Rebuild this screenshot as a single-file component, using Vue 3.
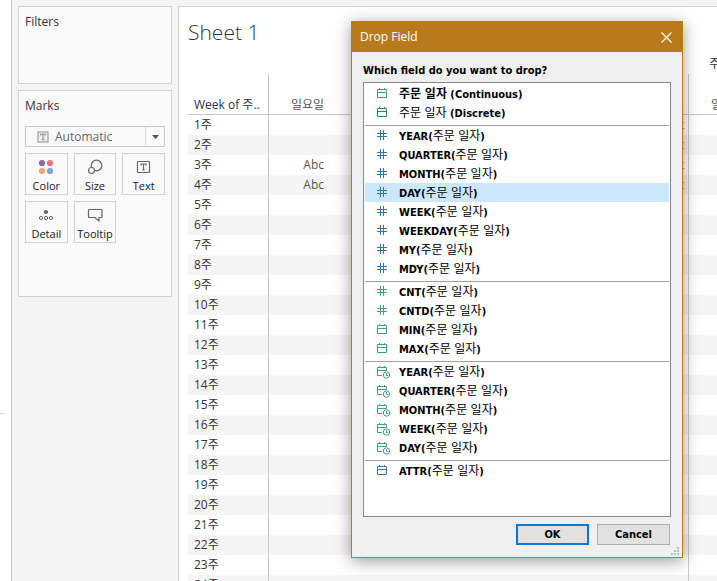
<script setup>
import { ref } from 'vue'

const markType = ref('Automatic')
const marks = ['Color', 'Size', 'Text', 'Detail', 'Tooltip']
const weekdays = ['일요일', '월요일', '화요일', '수요일', '목요일', '금요일', '토요일']
const columns = [...weekdays, ...weekdays]

// Column indexes that hold a mark, by week number
const filled = { 1: [6], 2: [6], 3: [0, 6], 4: [0, 6] }
const weeks = Array.from({ length: 30 }, (_, i) => i + 1)

const field = '주문 일자'
const item = (id, pre, post, icon, tone) => ({ id, pre, post, icon, tone })
const fn = (name, icon, tone) => item(`${name}-${icon}`, `${name}(`, ')', icon, tone)

const groups = [
  [
    { ...item('continuous', '', ' (Continuous)', 'date', 'green'), strong: true },
    item('discrete', '', ' (Discrete)', 'date', 'blue'),
  ],
  ['YEAR', 'QUARTER', 'MONTH', 'DAY', 'WEEK', 'WEEKDAY', 'MY', 'MDY'].map((n) => fn(n, 'number', 'blue')),
  [
    fn('CNT', 'number', 'green'),
    fn('CNTD', 'number', 'green'),
    fn('MIN', 'date', 'green'),
    fn('MAX', 'date', 'green'),
  ],
  ['YEAR', 'QUARTER', 'MONTH', 'WEEK', 'DAY'].map((n) => fn(n, 'datetime', 'green')),
  [fn('ATTR', 'date', 'blue')],
]
const selected = ref('DAY-number')
const open = ref(true)
</script>

<template>
  <div class="app">
    <div class="data-pane"><hr class="pane-rule" /></div>

    <aside class="shelves">
      <section class="card filters">
        <h2>Filters</h2>
      </section>
      <section class="card marks">
        <h2>Marks</h2>
        <div class="mark-type">
          <select v-model="markType" aria-label="Mark type">
            <option>Automatic</option>
            <option>Bar</option>
            <option>Line</option>
          </select>
          <svg class="type-icon" width="12" height="12" viewBox="0 0 12 12" aria-hidden="true">
            <rect x="1" y="1" width="10" height="10" fill="#f0f0f0" stroke="#aaa" stroke-width="1.4" />
            <path d="M3.5 4.5v-1.2h5v1.2M6 3.3v5.4M4.6 8.7h2.8" fill="none" stroke="#999" stroke-width="1.2" />
          </svg>
          <span class="arrow" aria-hidden="true"><svg width="7" height="4" viewBox="0 0 7 4"><path d="M0 0h7L3.5 4z" fill="#555" /></svg></span>
        </div>
        <div class="mark-grid">
          <button v-for="m in marks" :key="m" type="button" class="mark">
            <svg width="16" height="16" viewBox="0 0 16 16" fill="none" stroke="#666" stroke-width="1.2" aria-hidden="true">
              <g v-if="m === 'Color'" stroke="none">
                <circle cx="4" cy="4" r="3.1" fill="#84709b" />
                <circle cx="12" cy="4" r="3.1" fill="#fc7183" />
                <circle cx="4" cy="12" r="3.1" fill="#f3a67c" />
                <circle cx="12" cy="12" r="3.1" fill="#82a6cd" />
              </g>
              <g v-else-if="m === 'Size'">
                <circle cx="9.5" cy="6.5" r="5.3" />
                <circle cx="4.5" cy="11.5" r="3" fill="#fafafa" />
              </g>
              <g v-else-if="m === 'Text'">
                <rect x="1.5" y="2.5" width="12" height="11" rx="0.5" />
                <path d="M5 6.5V5h5v1.5M7.5 5v6M6.2 11h2.6" />
              </g>
              <g v-else-if="m === 'Detail'">
                <circle cx="8" cy="5" r="2.1" fill="#666" stroke="none" />
                <circle cx="3" cy="11" r="1.6" stroke-width="1" />
                <circle cx="8" cy="11" r="1.6" stroke-width="1" />
                <circle cx="13" cy="11" r="1.6" stroke-width="1" />
              </g>
              <path v-else d="M2.1 2.5h12.3q.6 0 .6.6v6.8q0 .6-.6.6h-2.4V14l-4-3.5H2.1q-.6 0-.6-.6V3.1q0-.6.6-.6z" />
            </svg>
            <span>{{ m }}</span>
          </button>
        </div>
      </section>
    </aside>

    <main class="sheet">
      <h1>Sheet 1</h1>
      <table>
        <colgroup>
          <col class="stub-col" />
          <col v-for="(c, i) in columns" :key="i" class="day-col" />
        </colgroup>
        <thead>
          <tr class="group-head">
            <th colspan="8"></th>
            <th colspan="7" class="group">{{ field }}</th>
          </tr>
          <tr class="day-head">
            <th class="stub">Week of 주..</th>
            <th v-for="(c, i) in columns" :key="i" :class="{ edge: i % 7 === 6 }">{{ c }}</th>
          </tr>
        </thead>
        <tbody>
          <tr v-for="w in weeks" :key="w">
            <th class="stub">{{ w }}주</th>
            <td v-for="(c, i) in columns" :key="i" :class="{ edge: i % 7 === 6 }">{{ filled[w]?.includes(i) ? 'Abc' : '' }}</td>
          </tr>
        </tbody>
      </table>
    </main>

    <div v-if="open" class="dialog" role="dialog" aria-labelledby="dlg-title">
      <header class="titlebar">
        <span id="dlg-title">Drop Field</span>
        <button type="button" class="close" aria-label="Close" @click="open = false">
          <svg width="11" height="11" viewBox="0 0 11 11"><path d="M.5.5l10 10M10.5.5l-10 10" stroke="#fff" stroke-width="1.2" /></svg>
        </button>
      </header>
      <div class="dialog-body">
        <p id="dlg-prompt">Which field do you want to drop?</p>
        <div class="field-list" role="listbox" aria-labelledby="dlg-prompt">
          <div v-for="(g, gi) in groups" :key="gi" class="field-group" role="group">
            <button
              v-for="f in g"
              :key="f.id"
              type="button"
              role="option"
              class="field"
              :class="[f.tone, { selected: selected === f.id }]"
              :aria-selected="selected === f.id"
              @click="selected = f.id"
            >
              <svg class="field-icon" width="14" height="15" viewBox="0 0 14 15" fill="none" stroke="currentColor" aria-hidden="true">
                <path v-if="f.icon === 'number'" d="M3.5 2v10M6.5 2v10M0 5.5h10M0 8.5h10" />
                <path v-else-if="f.icon === 'date'" d="M.5 3.5h9v8h-9zM.5 6.5h9M2.5 2v2M7.5 2v2" />
                <g v-else>
                  <path d="M5 11.5H.5v-8h9v3H.5M2.5 2v2M7.5 2v2" />
                  <circle cx="9.5" cy="11" r="3.2" />
                  <path d="M9.5 9v2.5h1.7" />
                </g>
              </svg>
              <span class="label">{{ f.pre }}<span class="ko" :class="{ strong: f.strong }">{{ field }}</span>{{ f.post }}</span>
            </button>
          </div>
        </div>
        <footer>
          <button type="button" class="push primary">OK</button>
          <button type="button" class="push" @click="open = false">Cancel</button>
        </footer>
      </div>
      <svg class="grip" width="8" height="8" viewBox="0 0 8 8" fill="#bfbfbf" aria-hidden="true">
        <path d="M6 0h2v2H6zM3 3h2v2H3zM6 3h2v2H6zM0 6h2v2H0zM3 6h2v2H3zM6 6h2v2H6z" />
      </svg>
    </div>
  </div>
</template>

<style>
body {
  margin: 0;
  background: #f4f4f4;
}
</style>

<style scoped>
.app {
  position: relative;
  display: flex;
  height: 100vh;
  overflow: hidden;
  box-sizing: border-box;
  background: #f4f4f4;
  color: #333;
  font-family: "Open Sans", "Noto Sans CJK KR", sans-serif;
  font-size: 12px;
  line-height: 16px;
}
.app * {
  box-sizing: border-box;
}
button,
select {
  font: inherit;
  color: inherit;
}
h1,
h2,
p {
  margin: 0;
}
.data-pane {
  flex: 0 0 12px;
  display: flex;
  align-items: flex-start;
  background: #fff;
  border-right: 1px solid #cdcdcd;
}
.pane-rule {
  width: 5px;
  margin: 413px 0 0;
  border: 0;
  border-top: 1px solid #ddd;
}
.shelves {
  flex: 0 0 166px;
  display: flex;
  flex-direction: column;
  gap: 6px;
  padding: 6px;
}
.card {
  padding: 6px;
  background: #fafafa;
  border: 1px solid #d0d0d0;
}
.card h2 {
  font-size: 12px;
  font-weight: 400;
  line-height: 18px;
}
.filters {
  height: 78px;
}
.marks {
  height: 207px;
}
.mark-type {
  display: grid;
  align-items: center;
  margin-top: 11px;
}
.mark-type > * {
  grid-area: 1 / 1;
}
.mark-type select {
  width: 100%;
  height: 21px;
  padding: 0 0 0 29px;
  appearance: none;
  background: #fafafa;
  border: 1px solid #c8c8c8;
  border-radius: 1px;
  color: #666;
}
.type-icon {
  margin-left: 12px;
  pointer-events: none;
}
.arrow {
  display: flex;
  align-items: center;
  justify-content: center;
  justify-self: end;
  width: 20px;
  height: 19px;
  border-left: 1px solid #ddd;
  pointer-events: none;
}
.mark-grid {
  display: grid;
  grid-template-columns: repeat(3, 1fr);
  gap: 6px;
  margin-top: 6px;
}
.mark {
  display: flex;
  flex-direction: column;
  align-items: center;
  gap: 3px;
  height: 42px;
  padding: 5px 0 0;
  background: #fafafa;
  border: 1px solid #d0d0d0;
  font-size: 11px;
  color: #222;
}
.sheet {
  flex: 1;
  min-width: 0;
  margin-top: 6px;
  padding: 12px 0 0 9px;
  overflow: hidden;
  background: #fff;
  border: solid #d0d0d0;
  border-width: 1px 0 0 1px;
}
.sheet h1 {
  font-size: 21px;
  font-weight: 300;
  line-height: 26px;
}
table {
  width: 921px;
  margin-top: 9px;
  table-layout: fixed;
  border-collapse: separate;
  border-spacing: 0;
}
.stub-col {
  width: 81px;
}
.day-col {
  width: 60px;
}
th,
td {
  height: 20px;
  padding: 0 5px 0 0;
  font-weight: 400;
  line-height: 18px;
  text-align: right;
  white-space: nowrap;
  color: #555;
}
.stub {
  padding: 0 0 0 6px;
  line-height: 20px;
  text-align: left;
  color: #333;
  border-right: 1px solid #c8c8c8;
}
.edge {
  padding-right: 4px;
  border-right: 1px solid #c8c8c8;
}
.group-head .group {
  padding: 0 0 0 20px;
  text-align: left;
  color: #333;
}
.day-head th {
  height: 41px;
  line-height: 18px;
  vertical-align: bottom;
  border-bottom: 1px solid #c8c8c8;
}
tbody tr:nth-child(even) {
  background: #f5f5f5;
}
.dialog {
  position: absolute;
  top: 21px;
  left: 351px;
  width: 332px;
  background: #f0f0f0;
  border: 1px solid #b97a1b;
  box-shadow: 0 3px 15px rgba(0, 0, 0, 0.4);
  color: #000;
}
.titlebar {
  display: flex;
  align-items: center;
  justify-content: space-between;
  height: 30px;
  padding: 0 10px 0 8px;
  background: #b97a1b;
  color: #fff;
}
.close {
  display: flex;
  padding: 0;
  background: none;
  border: 0;
}
.dialog-body {
  padding: 10px 11px 12px;
  font-family: "DejaVu Sans Condensed", "Noto Sans CJK KR", sans-serif;
  font-size: 11px;
  font-weight: 700;
}
.dialog-body p {
  line-height: 18px;
}
.field-list {
  height: 435px;
  margin-top: 2px;
  padding: 1px;
  background: #fff;
  border: 1px solid #828790;
}
.field-group + .field-group {
  margin-top: 3px;
  border-top: 1px solid #a0a0a0;
}
.field {
  display: flex;
  align-items: center;
  gap: 8px;
  width: 100%;
  height: 19px;
  padding: 0 0 0 12px;
  background: none;
  border: 0;
  text-align: left;
}
.field-icon {
  overflow: visible;
}
.field.selected {
  background: #cce8ff;
}
.green {
  color: #449e7a;
}
.blue {
  color: #35779a;
}
.label {
  padding-top: 2px;
  color: #000;
  line-height: 17px;
  white-space: pre;
}
.ko {
  font-size: 12px;
  font-weight: 400;
  line-height: 12px;
}
.ko.strong {
  font-weight: 700;
}
footer {
  display: flex;
  justify-content: flex-end;
  gap: 8px;
  margin-top: 7px;
  padding-right: 1px;
}
.push {
  width: 73px;
  height: 21px;
  padding: 0;
  background: #e1e1e1;
  border: 1px solid #adadad;
}
.push.primary {
  border: 2px solid #0078d7;
}
.grip {
  position: absolute;
  right: 3px;
  bottom: 2px;
}
</style>
